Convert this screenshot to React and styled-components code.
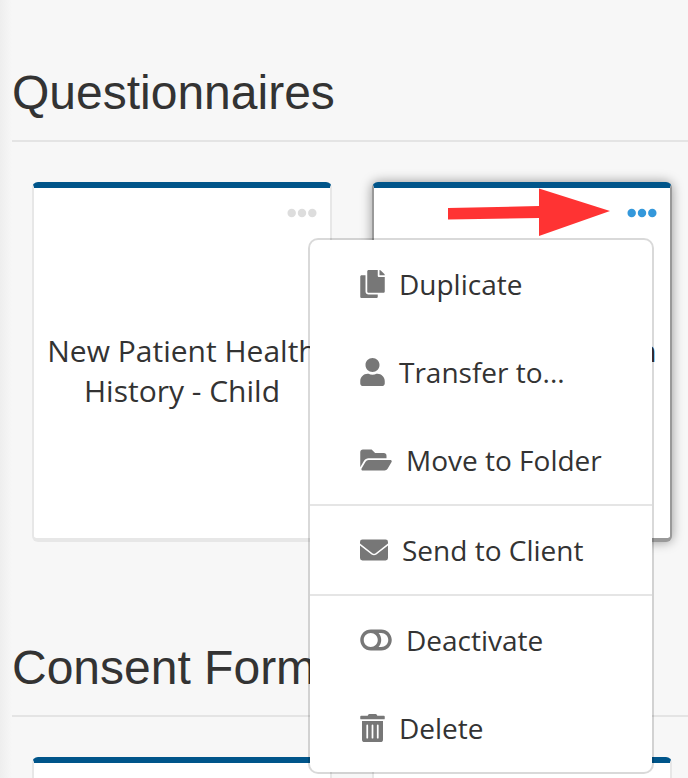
import React from "react";
import styled, { createGlobalStyle } from "styled-components";
import {
  FaCopy,
  FaUser,
  FaFolderOpen,
  FaToggleOff,
  FaTrashAlt,
  FaEllipsisH,
} from "react-icons/fa";

function EnvelopeIcon() {
  return (
    <svg viewBox="0 0 28 28" fill="currentColor">
      <path d="M2.4 3.5 H25.6 A2.4 2.4 0 0 1 28 5.9 V7.6 L15.6 17.2 Q14 18.3 12.4 17.2 L0 7.6 V5.9 A2.4 2.4 0 0 1 2.4 3.5 Z" />
      <path d="M0 9.4 L11.6 18.4 Q14 20 16.4 18.4 L28 9.4 V22.1 A2.4 2.4 0 0 1 25.6 24.5 H2.4 A2.4 2.4 0 0 1 0 22.1 Z" />
    </svg>
  );
}

const menuGroups = [
  [
    { label: "Duplicate", icon: FaCopy, width: 25 },
    { label: "Transfer to...", icon: FaUser, width: 25 },
    { label: "Move to Folder", icon: FaFolderOpen, width: 32 },
  ],
  [{ label: "Send to Client", icon: EnvelopeIcon, width: 28 }],
  [
    { label: "Deactivate", icon: FaToggleOff, width: 32 },
    { label: "Delete", icon: FaTrashAlt, width: 25 },
  ],
];

function ActionMenu() {
  return (
    <Menu>
      {menuGroups.map((group, index) => (
        <MenuGroup key={index}>
          {group.map(({ label, icon: Icon, width }) => (
            <MenuItem key={label} type="button" $iconWidth={width}>
              <Icon />
              {label}
            </MenuItem>
          ))}
        </MenuGroup>
      ))}
    </Menu>
  );
}

function FormCard({ title, active, children }) {
  return (
    <Card $active={active}>
      <MoreButton type="button" aria-label="More actions" $active={active}>
        <FaEllipsisH />
      </MoreButton>
      {title && <CardTitle>{title}</CardTitle>}
      {children}
    </Card>
  );
}

export default function App() {
  return (
    <Page>
      <GlobalStyle />
      <Section>
        <SectionTitle>Questionnaires</SectionTitle>
        <CardGrid>
          <FormCard title="New Patient Health History - Child" />
          <FormCard title="New Patient Health History - Adult" active>
            <Arrow viewBox="0 0 164 50" aria-hidden="true">
              <path d="M1 20 L92 18 L92 0.5 L163 23 L92 48 L92 30 L1 31.5 Z" />
            </Arrow>
            <ActionMenu />
          </FormCard>
        </CardGrid>
      </Section>
      <Section>
        <SectionTitle>Consent Forms</SectionTitle>
        <CardGrid>
          <FormCard />
          <FormCard />
        </CardGrid>
      </Section>
    </Page>
  );
}

const GlobalStyle = createGlobalStyle`
  * {
    box-sizing: border-box;
  }
  body {
    margin: 0;
    color: #333;
    background: #f7f7f7;
    font-family: "Open Sans", sans-serif;
  }
`;

const Page = styled.main`
  height: 100vh;
  overflow: auto;
  scrollbar-width: none;
  padding-left: 12px;
  background: linear-gradient(to right, #eeeeee, #f7f7f7 12px);
`;

const Section = styled.section`
  padding: 65px 0 33px;
`;

const SectionTitle = styled.h2`
  margin: 0;
  padding-bottom: 19px;
  border-bottom: 2px solid #e4e4e4;
  font-family: "Liberation Sans", Arial, sans-serif;
  font-size: 48px;
  font-weight: 400;
  line-height: 56px;
`;

const CardGrid = styled.div`
  display: grid;
  grid-template-columns: repeat(auto-fill, 300px);
  gap: 40px;
  padding: 40px 0 0 20px;
`;

const Card = styled.article`
  position: relative;
  display: flex;
  flex-direction: column;
  min-height: 360px;
  border: 2px solid ${({ $active }) => ($active ? "#999" : "#e7e7e7")};
  border-top: 6px solid #00558a;
  border-bottom-width: 4px;
  border-radius: 6px;
  background: #fff;
  box-shadow: ${({ $active }) => ($active ? "0 0 12px rgba(0, 0, 0, 0.4)" : "none")};
`;

const MoreButton = styled.button`
  align-self: flex-end;
  display: flex;
  margin: 10px 13px 0;
  padding: 0;
  border: none;
  background: none;
  color: ${({ $active }) => ($active ? "#3498db" : "#ddd")};
  font-size: 30px;
  cursor: pointer;
`;

const CardTitle = styled.h3`
  flex: 1;
  display: flex;
  align-items: center;
  margin: 0;
  padding: 0 12px 24px;
  font-size: 30px;
  font-weight: 400;
  line-height: 40px;
  text-align: center;
`;

// points at the open card's "more" button
const Arrow = styled.svg`
  position: absolute;
  top: 0;
  right: 59px;
  width: 164px;
  height: 50px;
  fill: #ff3333;
`;

const Menu = styled.div`
  position: absolute;
  z-index: 1;
  top: 50px;
  right: 16px;
  width: 346px;
  border: 2px solid rgba(0, 0, 0, 0.15);
  border-radius: 10px;
  background: #fff;
  background-clip: padding-box;
`;

const MenuGroup = styled.div`
  & + & {
    border-top: 2px solid #e5e5e5;
  }
`;

const MenuItem = styled.button`
  display: flex;
  align-items: center;
  gap: 14px;
  width: 100%;
  height: 88px;
  padding: 0 50px;
  border: none;
  background: none;
  color: #333;
  font-family: inherit;
  font-size: 28px;
  white-space: nowrap;
  cursor: pointer;

  svg {
    flex: none;
    width: ${({ $iconWidth }) => $iconWidth}px;
    height: 28px;
    color: #777;
  }
`;
